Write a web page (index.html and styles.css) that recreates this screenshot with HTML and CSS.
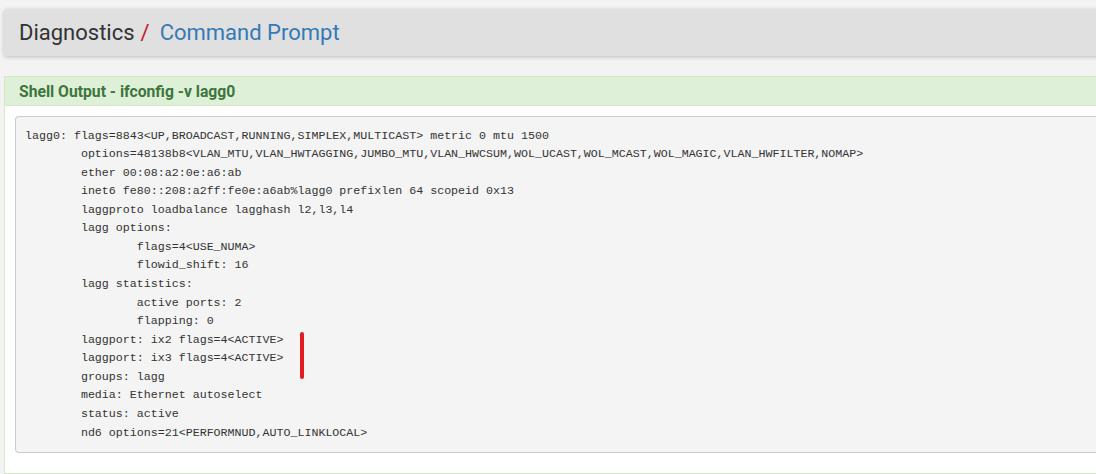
FILE: index.html
```html
<!DOCTYPE html>
<html>
<head>
<meta charset="utf-8">
<link rel="stylesheet" href="styles.css">
</head>
<body>
<div class="page">
  <div class="header">
    <h1 class="crumbs"><span class="crumb-root">Diagnostics</span><span class="sep">/</span><a class="crumb-link">Command Prompt</a></h1>
  </div>
  <div class="panel">
    <div class="panel-heading"><h2 class="panel-title">Shell Output - ifconfig -v lagg0</h2></div>
    <div class="panel-body">
      <div class="pre-wrap">
<pre class="shell">lagg0: flags=8843&lt;UP,BROADCAST,RUNNING,SIMPLEX,MULTICAST&gt; metric 0 mtu 1500
	options=48138b8&lt;VLAN_MTU,VLAN_HWTAGGING,JUMBO_MTU,VLAN_HWCSUM,WOL_UCAST,WOL_MCAST,WOL_MAGIC,VLAN_HWFILTER,NOMAP&gt;
	ether 00:08:a2:0e:a6:ab
	inet6 fe80::208:a2ff:fe0e:a6ab%lagg0 prefixlen 64 scopeid 0x13
	laggproto loadbalance lagghash l2,l3,l4
	lagg options:
		flags=4&lt;USE_NUMA&gt;
		flowid_shift: 16
	lagg statistics:
		active ports: 2
		flapping: 0
	laggport: ix2 flags=4&lt;ACTIVE&gt;
	laggport: ix3 flags=4&lt;ACTIVE&gt;
	groups: lagg
	media: Ethernet autoselect
	status: active
	nd6 options=21&lt;PERFORMNUD,AUTO_LINKLOCAL&gt;</pre>
        <span class="mark"></span>
      </div>
    </div>
  </div>
</div>
</body>
</html>
```

FILE: styles.css
```css
html, body {
  margin: 0;
  padding: 0;
}
body {
  background: #f3f3f3;
  font-family: Roboto, "Liberation Sans", sans-serif;
  overflow: hidden;
  width: 1096px;
  height: 474px;
}
.page {
  width: 1120px;
  padding: 9px 0 0 4px;
}
.header {
  background: #e0e0e0;
  height: 47px;
  border-radius: 3px;
  box-shadow: 0 1px 4px rgba(0,0,0,0.22);
  display: flex;
  align-items: center;
  padding-left: 15px;
}
.crumbs {
  margin: 0;
  font-size: 22px;
  font-weight: 400;
  line-height: 1;
  display: flex;
  align-items: baseline;
}
.crumb-root { color: #333; }
.sep {
  color: #c3182b;
  margin: 0 10px 0 6px;
}
.crumb-link { color: #337ab7; }
.panel {
  margin-top: 20px;
  background: #fff;
  border: 1px solid #d6e9c6;
  border-right: none;
}
.panel-heading {
  background: #dff0d8;
  border-bottom: 1px solid #d6e9c6;
  height: 28px;
  display: flex;
  align-items: center;
  padding-left: 14px;
}
.panel-title {
  margin: 0;
  font-size: 15.7px;
  font-weight: 700;
  color: #3c763d;
}
.panel-body {
  padding: 10px 0 10px 10px;
}
.pre-wrap {
  position: relative;
  margin-bottom: 10px;
}
.shell {
  margin: 0;
  background: #f4f4f4;
  border: 1px solid #ccc;
  border-right: none;
  border-radius: 4px 0 0 4px;
  padding: 9.5px 10px 9.5px 9px;
  font-family: "Liberation Mono", "DejaVu Sans Mono", monospace;
  font-size: 11.65px;
  line-height: 18.57px;
  color: #333;
  tab-size: 8;
  white-space: pre;
}
.mark {
  position: absolute;
  left: 285px;
  top: 216px;
  width: 4px;
  height: 47px;
  background: #e21a22;
  border-radius: 2px;
}
```
